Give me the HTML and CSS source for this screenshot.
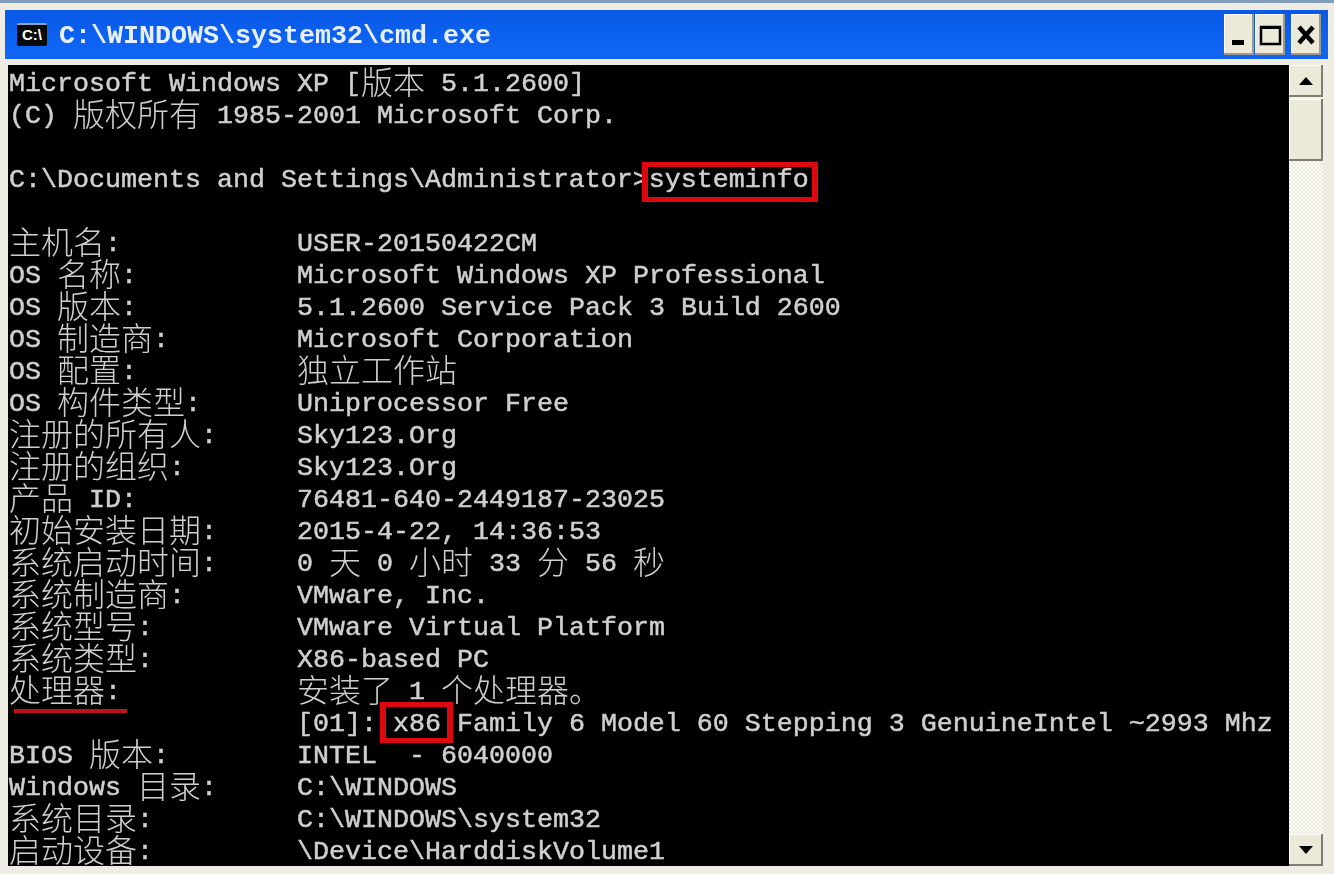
FILE: index.html
```html
<!DOCTYPE html>
<html lang="zh-CN">
<head>
<meta charset="utf-8">
<title>cmd.exe</title>
<link rel="stylesheet" href="styles.css">
</head>
<body>
<div class="window">
  <header class="titlebar">
    <div class="appicon"><span>C:\</span></div>
    <div class="title">C:\WINDOWS\system32\cmd.exe</div>
    <div class="controls">
      <button class="ctl"><svg viewBox="0 0 30 38" width="30" height="38"><rect x="8" y="24" width="12" height="5" fill="#000"/></svg></button>
      <button class="ctl"><svg viewBox="0 0 30 38" width="30" height="38"><rect x="6" y="11" width="19" height="17" fill="none" stroke="#000" stroke-width="2.5"/><rect x="5" y="10" width="21" height="3" fill="#000"/></svg></button>
      <button class="ctl ctl-close"><svg viewBox="0 0 30 38" width="30" height="38"><path d="M8 11 L22 27 M22 11 L8 27" stroke="#000" stroke-width="4.5" fill="none"/></svg></button>
    </div>
  </header>
  <div class="client">
<pre class="console">Microsoft Windows XP [<i>版本</i> 5.1.2600]
(C) <i>版权所有</i> 1985-2001 Microsoft Corp.

C:\Documents and Settings\Administrator&gt;<span class="mark mark-cmd">systeminfo</span>

<i>主机名</i>:           USER-20150422CM
OS <i>名称</i>:          Microsoft Windows XP Professional
OS <i>版本</i>:          5.1.2600 Service Pack 3 Build 2600
OS <i>制造商</i>:        Microsoft Corporation
OS <i>配置</i>:          <i>独立工作站</i>
OS <i>构件类型</i>:      Uniprocessor Free
<i>注册的所有人</i>:     Sky123.Org
<i>注册的组织</i>:       Sky123.Org
<i>产品</i> ID:          76481-640-2449187-23025
<i>初始安装日期</i>:     2015-4-22, 14:36:53
<i>系统启动时间</i>:     0 <i>天</i> 0 <i>小时</i> 33 <i>分</i> 56 <i>秒</i>
<i>系统制造商</i>:       VMware, Inc.
<i>系统型号</i>:         VMware Virtual Platform
<i>系统类型</i>:         X86-based PC
<span class="under"><i>处理器</i>:</span>           <i>安装了</i> 1 <i>个处理器。</i>
                  [01]: <span class="mark mark-x86">x86</span> Family 6 Model 60 Stepping 3 GenuineIntel ~2993 Mhz
BIOS <i>版本</i>:        INTEL  - 6040000
Windows <i>目录</i>:     C:\WINDOWS
<i>系统目录</i>:         C:\WINDOWS\system32
<i>启动设备</i>:         \Device\HarddiskVolume1</pre>
    <aside class="scrollbar">
      <div class="sb-btn"><svg viewBox="0 0 14 8" width="14" height="8"><path d="M7 0 L14 8 H0 Z" fill="#000"/></svg></div>
      <div class="sb-thumb"></div>
      <div class="sb-track"></div>
      <div class="sb-btn"><svg viewBox="0 0 14 8" width="14" height="8"><path d="M0 0 H14 L7 8 Z" fill="#000"/></svg></div>
    </aside>
  </div>
</div>
</body>
</html>
```

FILE: styles.css
```css
* { box-sizing: border-box; }
html, body { margin: 0; padding: 0; width: 1334px; height: 874px; overflow: hidden; background: #ece9d8; }
.window {
  width: 1334px;
  height: 874px;
  display: flex;
  flex-direction: column;
  border-top: 3px solid #7f9db9;
  padding: 7px 6px 8px 5px;
  background: #efede3;
}
.titlebar {
  height: 49px;
  flex: none;
  display: flex;
  align-items: center;
  padding: 0 7px 0 12px;
  background: linear-gradient(#0a58e6, #0d62f2 60%, #1266f2);
}
.appicon {
  width: 30px;
  height: 23px;
  background: #0a0a0a;
  border-top: 2px solid #8fa3c8;
  border-radius: 2px;
  color: #fff;
  font: bold 15px/20px "Liberation Sans", sans-serif;
  text-align: center;
  flex: none;
}
.title {
  margin: 3px 0 0 12px;
  color: #e8f0ff;
  font: bold 26.67px/32px "Liberation Mono", monospace;
  flex: 1;
  white-space: pre;
  filter: blur(0.4px);
}
.controls { display: flex; flex: none; gap: 1px; }
.ctl {
  width: 30px;
  height: 41px;
  padding: 0;
  border: 0;
  background: #ece9d8;
  box-shadow: inset -2px -2px 0 #9c9a8f, inset 1px 1px 0 #fff;
  display: flex;
  align-items: center;
  justify-content: center;
}
.ctl-close { margin-left: 5px; }
.client {
  flex: 1;
  min-height: 0;
  margin: 6px 5px 0 3px;
  display: flex;
  background: #000;
}
.console {
  margin: 0;
  padding: 3px 0 0 1px;
  width: 1281px;
  flex: none;
  overflow: hidden;
  background: #000;
  color: #cfcfcf;
  font: 26.67px/32px "Liberation Mono", monospace;
  -webkit-text-stroke: 0.5px #cfcfcf;
  filter: blur(0.4px);
}
.console i {
  font: 300 32px/32px "Noto Sans CJK SC", sans-serif;
  line-height: 0;
  vertical-align: -3px;
  -webkit-text-stroke: 0;
}
.mark { position: relative; }
.mark::after {
  content: "";
  position: absolute;
  border: 5px solid #dc0a10;
  border-left-width: 6px;
  border-right-width: 6px;
}
.mark-cmd::after { left: -7px; right: -9px; top: -3px; bottom: -7px; }
.mark-x86::after { left: -13px; right: -12px; top: -7px; bottom: -4px; }
.under { position: relative; }
.under::after {
  content: "";
  position: absolute;
  left: 5px;
  width: 113px;
  bottom: -6px;
  height: 4px;
  background: #c0101a;
}
.scrollbar {
  width: 34px;
  flex: none;
  display: flex;
  flex-direction: column;
  background: #f4f2ea;
}
.sb-btn {
  height: 32px;
  flex: none;
  background: #ece9d8;
  box-shadow: inset -2px -2px 0 #807d72, inset 1px 1px 0 #fff;
  display: flex;
  align-items: center;
  justify-content: center;
}
.sb-thumb {
  height: 62px;
  margin-top: 2px;
  flex: none;
  background: #ece9d8;
  box-shadow: inset -2px -2px 0 #807d72, inset 1px 1px 0 #fff;
}
.sb-track {
  flex: 1;
  background: repeating-conic-gradient(#ece9d8 0 25%, #fff 0 50%) 0 0 / 4px 4px;
}
```
